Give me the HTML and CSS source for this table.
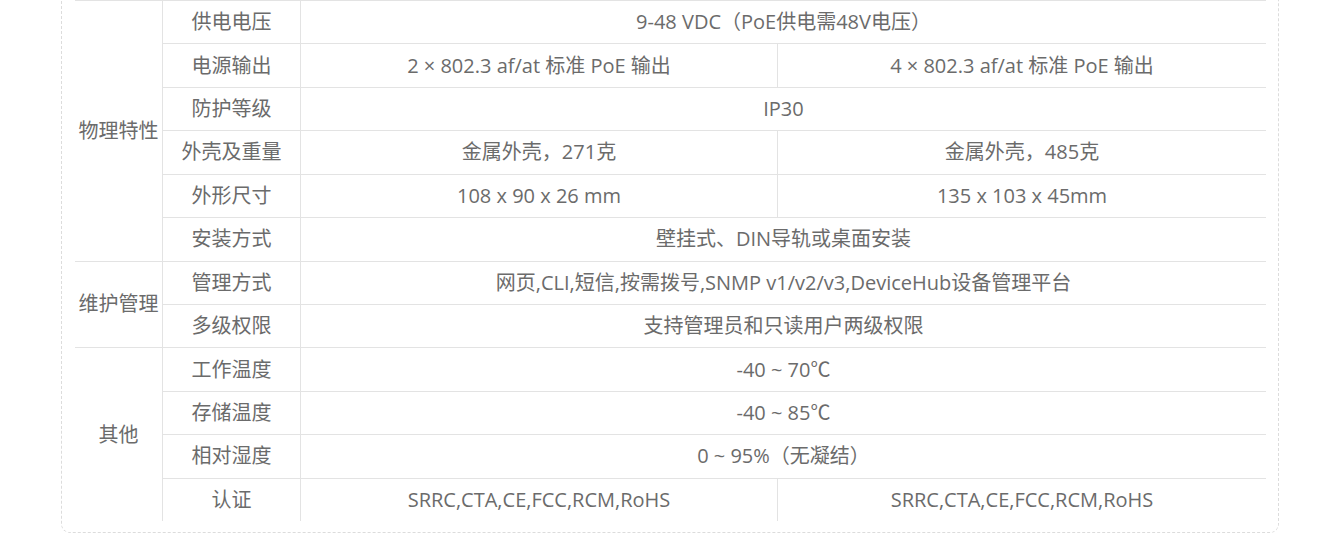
FILE: index.html
```html
<!DOCTYPE html>
<html lang="zh-CN">
<head>
<meta charset="utf-8">
<title>规格参数</title>
<link rel="stylesheet" href="styles.css">
</head>
<body>
<div class="card">
  <div class="spec">
    <div class="group g1">物理特性</div>
    <div class="label">供电电压</div>
    <div class="val wide">9-48 VDC（PoE供电需48V电压）</div>
    <div class="label">电源输出</div>
    <div class="val">2 × 802.3 af/at 标准 PoE 输出</div>
    <div class="val last">4 × 802.3 af/at 标准 PoE 输出</div>
    <div class="label">防护等级</div>
    <div class="val wide">IP30</div>
    <div class="label">外壳及重量</div>
    <div class="val">金属外壳，271克</div>
    <div class="val last">金属外壳，485克</div>
    <div class="label">外形尺寸</div>
    <div class="val">108 x 90 x 26 mm</div>
    <div class="val last">135 x 103 x 45mm</div>
    <div class="label">安装方式</div>
    <div class="val wide">壁挂式、DIN导轨或桌面安装</div>

    <div class="group g2">维护管理</div>
    <div class="label">管理方式</div>
    <div class="val wide">网页,CLI,短信,按需拨号,SNMP v1/v2/v3,DeviceHub设备管理平台</div>
    <div class="label">多级权限</div>
    <div class="val wide">支持管理员和只读用户两级权限</div>

    <div class="group g3">其他</div>
    <div class="label">工作温度</div>
    <div class="val wide">-40 ~ 70℃</div>
    <div class="label">存储温度</div>
    <div class="val wide">-40 ~ 85℃</div>
    <div class="label">相对湿度</div>
    <div class="val wide">0 ~ 95%（无凝结）</div>
    <div class="label">认证</div>
    <div class="val">SRRC,CTA,CE,FCC,RCM,RoHS</div>
    <div class="val last">SRRC,CTA,CE,FCC,RCM,RoHS</div>
  </div>
</div>
</body>
</html>
```
FILE: styles.css
```css
html, body {
  margin: 0;
  padding: 0;
  background: #fff;
}
body {
  font-family: "Open Sans", "Noto Sans CJK SC", sans-serif;
  color: #6b6b6b;
  font-size: 20px;
  overflow: hidden;
}
.card {
  box-sizing: border-box;
  width: 1218px;
  margin: -31px 0 0 61px;
  padding: 30px 12px 11px 13px;
  border: 1px dashed #dcdcdc;
  border-radius: 9px;
}
.spec {
  display: grid;
  grid-template-columns: 88px 138px 477px 488px;
  grid-template-rows: repeat(12, 1fr);
  height: 521px;
}
.spec > div {
  display: flex;
  align-items: center;
  justify-content: center;
  text-align: center;
  border-top: 1px solid #e3e3e3;
  border-right: 1px solid #e3e3e3;
  white-space: nowrap;
  line-height: 1;
}
.spec > .last {
  border-right: none;
}
.spec > .wide {
  grid-column: 3 / 5;
  border-right: none;
}
.group { grid-column: 1; }
.g1 { grid-row: 1 / 7; }
.g2 { grid-row: 7 / 9; }
.g3 { grid-row: 9 / 13; }
.label { grid-column: 2; }
```
